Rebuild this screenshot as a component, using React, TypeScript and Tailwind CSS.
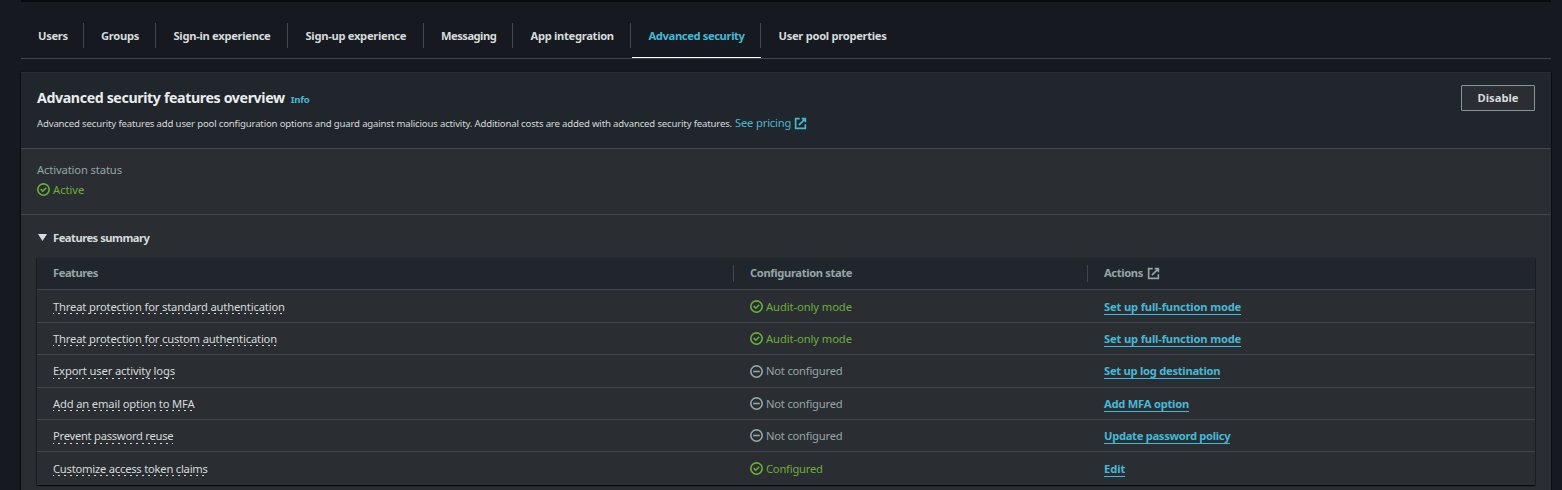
import type { ReactNode } from "react";

const tabs = [
  { label: "Users", width: "w-[63px]", text: "tracking-[-0.32px] pl-[17px]" },
  { label: "Groups", width: "w-[72px]", text: "tracking-[-0.3px] pl-[17px]" },
  { label: "Sign-in experience", width: "w-[132px]", text: "tracking-[-0.3px] pl-[17.5px]" },
  { label: "Sign-up experience", width: "w-[136px]", text: "tracking-[-0.3px] pl-[17.5px]" },
  { label: "Messaging", width: "w-[89px]", text: "tracking-[-0.52px] pl-[17px]" },
  { label: "App integration", width: "w-[118px]", text: "tracking-[-0.31px] pl-[17.5px]" },
  { label: "Advanced security", width: "w-[130px]", text: "tracking-[-0.38px] pl-[17.5px]", active: true },
  { label: "User pool properties", width: "w-[145px]", text: "tracking-[-0.3px] pl-[17.5px]" },
];

type State = "ok" | "off";

const rows: { feature: string; featureText: string; state: State; status: string; statusText: string; action: string; actionText: string; height: string }[] = [
  { feature: "Threat protection for standard authentication", featureText: "tracking-[-0.16px]", state: "ok", status: "Audit-only mode", statusText: "tracking-[-0.08px]", action: "Set up full-function mode", actionText: "tracking-[-0.17px]", height: "h-[33px] pt-px" },
  { feature: "Threat protection for custom authentication", featureText: "tracking-[-0.16px]", state: "ok", status: "Audit-only mode", statusText: "tracking-[-0.08px]", action: "Set up full-function mode", actionText: "tracking-[-0.17px]", height: "h-[32px]" },
  { feature: "Export user activity logs", featureText: "tracking-[-0.13px] pb-px", state: "off", status: "Not configured", statusText: "tracking-[-0.21px]", action: "Set up log destination", actionText: "tracking-[-0.27px]", height: "h-[33px]" },
  { feature: "Add an email option to MFA", featureText: "tracking-[-0.15px]", state: "off", status: "Not configured", statusText: "tracking-[-0.21px]", action: "Add MFA option", actionText: "tracking-[-0.25px]", height: "h-[32px]" },
  { feature: "Prevent password reuse", featureText: "tracking-[-0.26px] pb-px", state: "off", status: "Not configured", statusText: "tracking-[-0.21px]", action: "Update password policy", actionText: "tracking-[-0.3px]", height: "h-[32px]" },
  { feature: "Customize access token claims", featureText: "tracking-[-0.22px]", state: "ok", status: "Configured", statusText: "tracking-[-0.22px]", action: "Edit", actionText: "tracking-[-0.1px]", height: "h-[33px]" },
];

function ExternalIcon() {
  return (
    <svg className="size-[13px] shrink-0" viewBox="0 0 16 16" fill="none" stroke="currentColor" strokeWidth="2">
      <path d="M9.5 2H14v4.5M6 10l8-8" />
      <path d="M14 9.05V14H2V2h5" />
    </svg>
  );
}

function StatusIcon({ state }: { state: State }) {
  return (
    <svg className="size-[13px] shrink-0" viewBox="0 0 16 16" fill="none" stroke="currentColor" strokeWidth="2">
      <circle cx="8" cy="8" r="7" />
      {state === "ok" ? <path d="m4.6 7.6 2.5 2.5 4.3-4.3" /> : <path d="M4 8h8" />}
    </svg>
  );
}

function Status({ state, text, align = "items-center", children }: { state: State; text: string; align?: string; children: ReactNode }) {
  return (
    <span className={`flex gap-[3px] ${align} ${text} ${state === "ok" ? "text-[#6aaf35]" : "text-[#95a5a6]"}`}>
      <StatusIcon state={state} />
      <span>{children}</span>
    </span>
  );
}

export default function App() {
  return (
    <main className="h-[490px] overflow-hidden bg-[#16191f] pl-[21px] pr-[11px] font-['Noto_Sans',sans-serif] text-[11.2px] leading-4 whitespace-nowrap text-[#d5dbdb]">
      <div className="h-0.5 bg-[#08090c]" />
      <nav className="flex h-[57px] border-b border-[#414750] pt-[21px]">
        {tabs.map((tab, i) => (
          <div key={tab.label} className={`relative flex h-[25px] items-center font-bold ${tab.width} ${tab.text} ${i < tabs.length - 1 ? "border-r border-[#414750]" : ""} ${tab.active ? "text-[#44b9d6]" : ""}`}>
            {tab.label}
            {tab.active && <span className="absolute top-[34px] -right-px left-px h-px bg-white" />}
          </div>
        ))}
      </nav>
      <section className="mt-[13px] h-[430px] bg-[#2a2e33] shadow-[0_1px_1px_0_rgba(0,0,0,0.6),1px_0_1px_0_rgba(0,0,0,0.4),-1px_0_1px_0_rgba(0,0,0,0.4)]">
        <header className="flex h-[77px] justify-between border-t border-b border-t-[#2a2e33] border-b-[#414750] bg-[#21252c] pt-3 pr-4 pl-4">
          <div>
            <div className="flex h-[26px] items-center">
              <h1 className="text-[14.2px] font-bold tracking-[-0.38px] text-[#eaeded]">Advanced security features overview</h1>
              <a className="mt-[3px] ml-1.5 text-[9.6px] font-bold tracking-[-0.25px] text-[#44b9d6]">Info</a>
            </div>
            <p className="flex h-[25px] items-center text-[9.6px] tracking-[-0.17px]">
              <span>Advanced security features add user pool configuration options and guard against malicious activity. Additional costs are added with advanced security features.</span>
              <a className="mb-px ml-[3px] flex items-center gap-[3px] text-[11.2px] text-[#44b9d6]">
                See pricing
                <ExternalIcon />
              </a>
            </p>
          </div>
          <button className="h-[26px] w-[74px] rounded-[1px] border border-[#879596] bg-[#2a2e33] font-bold">Disable</button>
        </header>
        <div className="h-[66px] border-b border-[#414750] px-4 pt-[13px]">
          <div className="tracking-[-0.12px] text-[#95a5a6]">Activation status</div>
          <div className="mt-1">
            <Status state="ok" text="tracking-[-0.02px]" align="items-start pt-px [&>span]:-mt-px">Active</Status>
          </div>
        </div>
        <div className="px-4 pt-[15px]">
          <h2 className="flex h-4 items-center font-bold tracking-[-0.5px]">
            <svg className="mr-[6px] mb-px ml-px h-[7px] w-[9px]" viewBox="0 0 9 7" fill="currentColor">
              <path d="M0 0h9L4.5 7z" />
            </svg>
            Features summary
          </h2>
          <div className="mt-3 w-[1498px] bg-[#2a2e33] shadow-[0_1px_1px_0_rgba(0,0,0,0.8),1px_0_1px_0_rgba(0,0,0,0.25),-1px_0_1px_0_rgba(0,0,0,0.25)]">
            <div className="grid h-8 grid-cols-[697px_354px_1fr] items-center border-b border-[#414750] bg-[#21252c] pb-px font-bold text-[#95a5a6]">
              <div className="flex h-[17px] items-center border-r border-[#414750] pl-4 tracking-[-0.47px]">Features</div>
              <div className="flex h-[17px] items-center border-r border-[#414750] pl-4 tracking-[-0.36px]">Configuration state</div>
              <div className="flex items-center gap-1 pl-4 tracking-[-0.38px]">
                Actions
                <ExternalIcon />
              </div>
            </div>
            {rows.map((row) => (
              <div key={row.feature} className={`grid grid-cols-[697px_354px_1fr] items-center border-b border-[#414750] last:border-b-0 ${row.height}`}>
                <div className="pl-4">
                  <span className={`bg-[repeating-linear-gradient(90deg,#d5dbdb_0_1px,transparent_1px_5px,#d5dbdb_5px_6px)] bg-[length:100%_1px] bg-bottom bg-no-repeat ${row.featureText}`}>{row.feature}</span>
                </div>
                <div className="pl-4">
                  <Status state={row.state} text={row.statusText}>{row.status}</Status>
                </div>
                <div className="pl-4">
                  <a className={`border-b border-[#44b9d6] font-bold text-[#44b9d6] ${row.actionText}`}>{row.action}</a>
                </div>
              </div>
            ))}
          </div>
        </div>
      </section>
    </main>
  );
}
